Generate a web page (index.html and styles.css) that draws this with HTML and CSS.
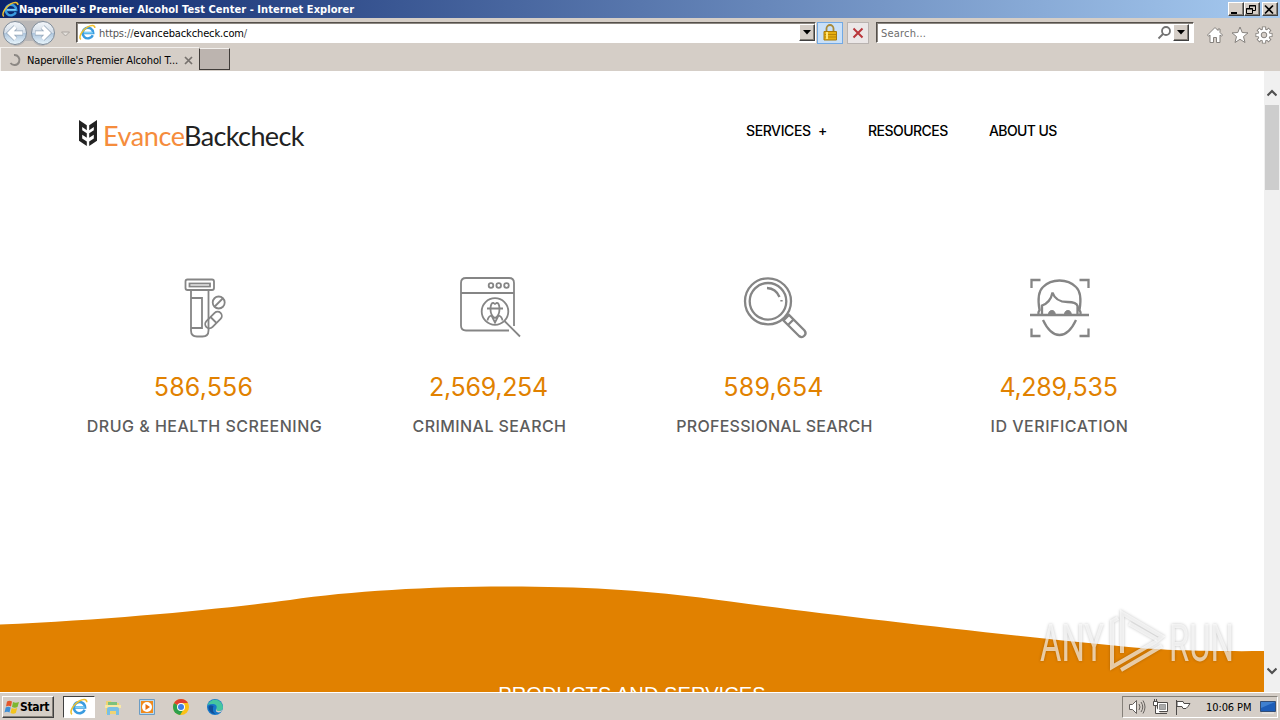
FILE: index.html
```html
<!DOCTYPE html>
<html lang="en">
<head>
  <meta charset="UTF-8" />
  <meta name="viewport" content="width=device-width, initial-scale=1.0"/>
  <title>Naperville's Premier Alcohol Test Center</title>
  <link rel="stylesheet" href="styles.css">
</head>
<body>
  <!-- shared symbols -->
  <svg width="0" height="0" class="defs">
    <symbol id="ie" viewBox="0 0 16 16">
      <path d="M13 10.500A5 5 0 1 1 13.400 8.400H4.200" fill="none" stroke="#3a9ce0" stroke-width="2.300"/>
      <path d="M4.600 8.200h8.400" stroke="#7fd0f7" stroke-width="1.400"/>
      <path d="M1.700 14.600C-.8 12.200 3 5.700 8.200 2.700 11.500.8 15 .6 14.900 3.700" fill="none" stroke="#efc02f" stroke-width="1.400"/>
    </symbol>
    <symbol id="down" viewBox="0 0 8 5"><path d="M0 0h8L4 4.500z" fill="#000"/></symbol>
  </svg>

  <div class="titlebar">
    <svg class="ie-icon" width="17" height="17"><use href="#ie"/></svg>
    <span class="title">Naperville's Premier Alcohol Test Center - Internet Explorer</span>
    <div class="win-buttons">
      <button><svg width="12" height="11"><path d="M2 8h6v2H2z"/></svg></button>
      <button><svg width="12" height="11" fill="none" stroke="#000"><path d="M4.500 4V1.500h6v5H8M4 2h7M1.500 4.500h6v5h-6zM1 5h7"/></svg></button>
      <button class="close"><svg width="12" height="11" stroke="#000" stroke-width="1.700"><path d="M2 1.500l8 8M10 1.500l-8 8"/></svg></button>
    </div>
  </div>

  <div class="navbar">
    <svg class="back-forward" width="74" height="28" viewBox="0 0 74 28">
      <defs>
        <linearGradient id="orb" x1="0" y1="0" x2="0" y2="1">
          <stop offset="0" stop-color="#f4f7fa"/><stop offset=".48" stop-color="#d3dde8"/>
          <stop offset=".52" stop-color="#afc6dd"/><stop offset="1" stop-color="#e9f6fd"/>
        </linearGradient>
      </defs>
      <path d="M15 1.500h28a13 13 0 0 1 0 25.500q-7 0-10-5h-8q-3 5-10 5a13 13 0 0 1 0-25.500z" fill="#b9b7b7"/>
      <circle cx="15" cy="14" r="11.500" fill="url(#orb)" stroke="#808c99"/>
      <circle cx="43" cy="14" r="11.500" fill="url(#orb)" stroke="#808c99"/>
      <path d="M23 14H10M15.500 8L9.500 14l6 6" fill="none" stroke="#93a5b8" stroke-width="5"/>
      <path d="M22.500 14H10M15.500 8L9.500 14l6 6" fill="none" stroke="#fff" stroke-width="3.600"/>
      <path d="M35 14h13M42.500 8l6 6-6 6" fill="none" stroke="#93a5b8" stroke-width="5"/>
      <path d="M35.500 14H48M42.500 8l6 6-6 6" fill="none" stroke="#fff" stroke-width="3.600"/>
      <path d="M61.500 13h8l-4 4z" fill="#e4e0dc" stroke="#aaa5a0"/>
    </svg>
    <div class="field address">
      <svg width="17" height="17"><use href="#ie"/></svg>
      <span class="url"><i>https://</i>evancebackcheck.com<i>/</i></span>
      <button class="drop"><svg width="8" height="5"><use href="#down"/></svg></button>
    </div>
    <div class="tool lock">
      <svg width="16" height="18" viewBox="0 0 16 18">
        <path d="M4.500 8V4.500a3.500 3.500 0 0 1 7 0V8" fill="none" stroke="#a88a3a" stroke-width="1.800"/>
        <path d="M2 7.500h12.500v8.500H2z" fill="#e5ae10" stroke="#a97a08"/>
        <path d="M2.500 10.500h11.500M2.500 13h11.500" stroke="#b98505"/>
        <path d="M5 8v7" stroke="#ffe477" stroke-width="2"/>
      </svg>
    </div>
    <div class="tool stop">
      <svg width="12" height="12" viewBox="0 0 12 12"><path d="M1.500 1.500l9 9M10.500 1.500l-9 9" stroke="#b9363b" stroke-width="2"/></svg>
    </div>
    <div class="field search">
      <span class="hint">Search...</span>
      <svg width="15" height="15" viewBox="0 0 15 15" fill="none" stroke="#737373" stroke-width="1.800"><circle cx="9" cy="6" r="4"/><path d="M6 9l-4.500 4.500"/></svg>
      <button class="drop"><svg width="8" height="5"><use href="#down"/></svg></button>
    </div>
    <div class="chrome-icons">
      <svg width="18" height="18" viewBox="0 0 18 18"><path d="M9 1.500L1.500 9l1 1.200L4 9v7.500h3.500v-5h3v5H14V9l1.500 1.200 1-1.200-2.500-2.500V3h-2v1.500z" fill="#fff" stroke="#85817d"/></svg>
      <svg width="18" height="18" viewBox="0 0 18 18"><path d="M9 1l2.200 5.500 5.800.4-4.500 3.700 1.500 5.900-5-3.200-5 3.200 1.500-5.900L1 6.900l5.800-.4z" fill="#fff" stroke="#85817d"/></svg>
      <svg width="18" height="18" viewBox="0 0 18 18">
        <g stroke="#85817d" stroke-width="4.200"><path d="M9 .5v17M.5 9h17M3 3l12 12M15 3L3 15"/></g>
        <circle cx="9" cy="9" r="6.500" fill="#85817d"/>
        <g stroke="#fff" stroke-width="2.400"><path d="M9 1.300v15.400M1.300 9h15.400M3.600 3.600l10.800 10.800M14.400 3.600L3.600 14.400"/></g>
        <circle cx="9" cy="9" r="5.600" fill="#fff"/>
        <circle cx="9" cy="9" r="2.800" fill="#d5cec7" stroke="#85817d"/>
      </svg>
    </div>
  </div>

  <div class="tabs">
    <div class="tab">
      <svg width="14" height="14" viewBox="0 0 14 14" fill="none" stroke="#8c8884" stroke-width="2"><path d="M6 2a5 5 0 1 1-3.500 8"/></svg>
      <span class="tab-title">Naperville's Premier Alcohol T...</span>
      <svg width="9" height="9" viewBox="0 0 9 9"><path d="M1 1l7 7M8 1L1 8" stroke="#76716d" stroke-width="1.700"/></svg>
    </div>
    <div class="new-tab"></div>
  </div>

  <div class="viewport">
    <div class="page">
      <header>
        <a class="logo">
          <svg width="18" height="27" viewBox="0 0 18 27" fill="#222">
            <path d="M0 0l7.800 5.200v5L3.200 7v3.200l4.600 3v4.600l-4.600-3v3.800l4.600 3V26L0 20.800z"/>
            <path d="M18 0l-7.800 5.200v5L14.800 7v3.200l-4.600 3v4.600l4.600-3v3.800l-4.600 3V26L18 20.800z"/>
          </svg>
          <span class="evance">Evance</span><span class="backcheck">Backcheck</span>
        </a>
        <nav>
          <a class="n1">SERVICES <b>+</b></a>
          <a class="n2">RESOURCES</a>
          <a class="n3">ABOUT US</a>
        </nav>
      </header>

      <section class="stats">
        <div class="stat">
          <svg width="70" height="80" viewBox="0 0 70 80">
            <rect x="15.500" y="14.500" width="28.500" height="10.500" rx="2"/>
            <rect x="19.500" y="18.500" width="20.500" height="3"/>
            <path d="M21 25v40.500q0 6 6 6h5.500q6 0 6-6V25M21 33h11v30H21"/>
            <circle cx="48.700" cy="37.500" r="6"/><path d="M44.700 41.500l8-8"/>
            <rect x="-10" y="-4.200" width="20" height="8.400" rx="4.200" transform="translate(43.500 55) rotate(-45)"/><path d="M40.500 52l6 6"/>
          </svg>
          <h3>586,556</h3>
          <p class="l1">DRUG &amp; HEALTH SCREENING</p>
        </div>
        <div class="stat">
          <svg width="80" height="80" viewBox="-1 0 80 80">
            <path d="M64 48V18q0-5-5-5H16q-5 0-5 5v42.500q0 5 5 5h43M11 28h53"/>
            <circle cx="41" cy="20.500" r="2.300"/><circle cx="48.700" cy="20.500" r="2.300"/><circle cx="56.500" cy="20.500" r="2.300"/>
            <circle cx="45" cy="46.500" r="13.300"/><path d="M54.500 56L70 71.500M64 48v13"/>
            <path d="M37 43.500h16M40.500 43q.5-5.500 3-5l1.500 1 1.500-1q2.500-.5 3 5M40.500 44q0 7 4.500 9 4.500-2 4.500-9M37.500 55.500q.5-4 4-5l3.500 7 3.500-7q3.500 1 4 5"/>
          </svg>
          <h3 class="wide">2,569,254</h3>
          <p class="l2">CRIMINAL SEARCH</p>
        </div>
        <div class="stat">
          <svg width="80" height="80" viewBox="-1 0 80 80" class="bold">
            <circle cx="33" cy="36.300" r="23"/><circle cx="33" cy="36.300" r="18.300"/>
            <path d="M32 23q9 .5 12.500 9M46.500 35v1.500M48.500 55.500l5.500-5.500 15.500 15.500q2.300 2.800-.2 5.300t-5.300.2zM53 60l5.500-5.500"/>
          </svg>
          <h3>589,654</h3>
          <p class="l3">PROFESSIONAL SEARCH</p>
        </div>
        <div class="stat">
          <svg width="80" height="80" viewBox=".5 0 80 80" class="bold">
            <path d="M12 23v-8h9M60 15h9v8M12 63.500v7.500h9M60 71h9v-7.500M10.500 50h59"/>
            <path d="M19 50q-.5-3 1-5-3-17 3.500-23Q30 15.500 40 15.500T56.500 22q6.500 6 3.500 23 1.500 2 1 5M22.500 49v-8.500q8.500-3 10.500-13 3 9.500 15 9.500 9 0 10 4v8"/>
            <path d="M23.500 55q7 15 16.500 15T56.500 55"/>
            <path d="M29 50a3.400 4.500 0 0 1 6.800 0zM45 50a3.400 4.500 0 0 1 6.800 0z" fill="#858585" stroke-width="1"/>
          </svg>
          <h3 class="wide">4,289,535</h3>
          <p class="l4">ID VERIFICATION</p>
        </div>
      </section>

      <section class="products">
        <svg class="wave" width="1264" height="70" viewBox="0 583 1264 70">
          <path d="M0 624.500C120 619 220 609 290 600 350 591 430 586.500 505 586.500 580 586.500 640 590 700 597.500 810 612.500 1010 636 1140 648 1170 650.500 1220 651.500 1264 651V653H0z" fill="#e18100"/>
        </svg>
        <h2>PRODUCTS AND SERVICES</h2>
      </section>
    </div>
    <div class="scrollbar">
      <svg width="10" height="8" viewBox="0 0 10 8"><path d="M.5 6.500L5 2l4.500 4.500" fill="none" stroke="#505050" stroke-width="2.200"/></svg>
      <div class="thumb"></div>
      <svg class="bottom" width="10" height="8" viewBox="0 0 10 8"><path d="M.5 1.500L5 6l4.500-4.500" fill="none" stroke="#505050" stroke-width="2.200"/></svg>
    </div>
    <svg class="watermark" width="214" height="74" viewBox="1034 604 214 74">
      <text x="1040" y="660" textLength="64" lengthAdjust="spacingAndGlyphs">ANY</text>
      <g fill="none" stroke="#fff" stroke-opacity=".65" stroke-width="4">
        <path d="M1118 617l-6 3.500v45.500l45-26"/>
        <path d="M1122 652v-40l40 23.500-4 3.500-29-16.500"/>
        <path d="M1121 669l41-24"/>
      </g>
      <text x="1169" y="660" textLength="65" lengthAdjust="spacingAndGlyphs">RUN</text>
    </svg>
  </div>

  <div class="taskbar">
    <button class="start">
      <svg width="16" height="16" viewBox="0 0 16 16">
        <path d="M3 2.500q2.500-1.500 5 0L7 7.500q-2.500-1.500-5 0z" fill="#e4572b"/><path d="M9 3q2.500 1.500 6 0l-1.500 5q-2.500 1.500-5.500 0z" fill="#7db72f"/>
        <path d="M1.700 8.500q2.500-1.500 5 0l-1.200 5q-2.500-1.500-5 0z" fill="#3f8fd6"/><path d="M7.700 9q2.500 1.500 5.500 0l-1.400 5q-2.500 1.500-5.300 0z" fill="#f4c41c"/>
      </svg>
      Start
    </button>
    <div class="task active"><svg width="18" height="18"><use href="#ie"/></svg></div>
    <div class="task">
      <svg width="18" height="18" viewBox="0 0 18 18"><path d="M2 3h5l1 2h7v11H2z" fill="#efd373"/><path d="M4 4h9v3H4z" fill="#7cc17c"/><path d="M1 7h16v3H1z" fill="#f7e8a6"/><path d="M3 17v-6q0-2 2-2h8q2 0 2 2v6h-3v-4H6v4z" fill="#79bfe5"/></svg>
    </div>
    <div class="task">
      <svg width="18" height="18" viewBox="0 0 18 18"><path d="M1.500 1.500h15v15h-15z" fill="#b9d9ef" stroke="#6b9cc4"/><path d="M3 3h12v12H3z" fill="#f08a1d"/><circle cx="9" cy="9" r="5" fill="#fff"/><path d="M7.500 6l4.500 3-4.500 3z" fill="#e86f10"/></svg>
    </div>
    <div class="task">
      <svg width="18" height="18" viewBox="0 0 18 18"><circle cx="9" cy="9" r="8" fill="#fbc116"/><path d="M9 9L2.100 5a8 8 0 0 0 6 12l3-5z" fill="#2da04c"/><path d="M2.100 5a8 8 0 0 1 13.800 0H9v4z" fill="#df3f31"/><circle cx="9" cy="9" r="4" fill="#fff"/><circle cx="9" cy="9" r="3" fill="#3f7fe6"/></svg>
    </div>
    <div class="task">
      <svg width="18" height="18" viewBox="0 0 18 18"><circle cx="9" cy="9" r="8" fill="#1677c9"/><path d="M1.500 7a8 8 0 0 1 15.500 2q0 4-4.500 4-3 0-2-2.500 1-4-3-4.500-3-.2-6 1z" fill="#45c6a0"/><path d="M7.500 8q-2 5 2 8-6-.5-7-6 0-4 5-2z" fill="#104f99"/><path d="M10.500 10q-1 3 2 3 3 0 4-1.500-1 3-4 3-4-.5-2-4.500z" fill="#d5cec7"/></svg>
    </div>
    <div class="tray">
      <svg width="18" height="16" viewBox="0 0 18 16" fill="#fff" stroke="#65615e"><path d="M1.500 5.500h3l4-4v13l-4-4h-3z"/><path d="M11 5q2 3 0 6M13 3q3.500 5 0 10M15 1.500q4 6.500 0 13" fill="none"/></svg>
      <svg width="17" height="16" viewBox="0 0 17 16" fill="#fff" stroke="#4e4b49"><path d="M5.500 3.500h10v9h-10z"/><path d="M7.500 5.500h6v5h-6z" fill="#aaa" stroke="#999"/><path d="M8 14.500h7M1.500 2.500h4v4h-4zM2.500 0v2M4.500 0v2M3.500 7v7.500h5"/></svg>
      <svg width="16" height="16" viewBox="0 0 16 16" fill="#fff" stroke="#4e4b49"><path d="M1.500 1v15M2 2.500h6l1 2h6l-2 3-2 2H8l-1-2H2z"/></svg>
      <span class="clock">10:06 PM</span>
      <svg width="16" height="13" viewBox="0 0 16 13"><path d="M.5.500h15v10H.5z" fill="#1d5db8" stroke="#344e75"/><path d="M1 1h14L1 7z" fill="#3f80d0"/><path d="M2 12h12" stroke="#eee"/></svg>
    </div>
  </div>
</body>
</html>
```

FILE: styles.css
```css
* {
  box-sizing: border-box;
}
body {
  margin: 0;
  width: 1280px;
  height: 720px;
  overflow: hidden;
  display: flex;
  flex-direction: column;
  background: #d5cec7;
  font-family: "DejaVu Sans Condensed", "DejaVu Sans", sans-serif;
  font-size: 11px;
  color: #000;
}
svg {
  display: block;
  flex: none;
}
button {
  padding: 0;
  font: inherit;
  background: #d5cec7;
  border: 1px solid;
  border-color: #fff #404040 #404040 #fff;
  box-shadow: inset -1px -1px #858079;
}
span, a, h2, h3, p {
  white-space: nowrap;
}
.defs {
  position: absolute;
}

/* window title */
.titlebar {
  height: 18px;
  display: flex;
  align-items: center;
  padding: 0 2px;
  background: linear-gradient(to right, #0a246a, #a6caf0);
}
.title {
  color: #fff;
  font-weight: bold;
  letter-spacing: 0.06px;
}
.win-buttons {
  display: flex;
  margin-left: auto;
}
.win-buttons button {
  width: 16px;
  height: 14px;
}
.win-buttons .close {
  margin-left: 2px;
}

/* address row */
.navbar {
  height: 29px;
  display: flex;
  align-items: center;
}
.back-forward {
  margin-right: 2px;
}
.field {
  height: 21px;
  display: flex;
  align-items: center;
  background: #fff;
  border: 1px solid;
  border-color: #55504b #fff #fff #55504b;
  box-shadow: inset 1px 1px #8c8781;
}
.address {
  width: 740px;
  padding: 0 0 0 2px;
}
.url {
  margin-left: 3px;
  padding-top: 2px;
  letter-spacing: -0.12px;
}
.url i {
  font-style: normal;
  color: #555;
}
.drop {
  width: 16px;
  height: 17px;
  display: flex;
  align-items: center;
  justify-content: center;
}
.address .drop {
  margin-left: auto;
}
.tool {
  height: 22px;
  display: flex;
  align-items: center;
  justify-content: center;
}
.lock {
  width: 26px;
  margin-left: 1px;
  background: #c9e0f8;
  border: 1px solid #72a9e4;
}
.stop {
  width: 22px;
  margin: 0 7px 0 4px;
  background: #ebe7e7;
  border: 1px solid #b9b3b0;
}
.search {
  width: 318px;
  padding: 0 4px 0 4px;
}
.hint {
  color: #6d6d6d;
  margin-right: auto;
  padding-top: 2px;
  letter-spacing: 0.2px;
}
.search .drop {
  margin-left: 1px;
}
.chrome-icons {
  display: flex;
  gap: 6.5px;
  margin: 4px 0 0 12px;
}

/* tabs */
.tabs {
  height: 24px;
  display: flex;
}
.tab {
  width: 199px;
  height: 24px;
  padding: 1px 6px 0 7px;
  display: flex;
  align-items: center;
  border: solid #f3f0ed;
  border-width: 1px 0 0 1px;
}
.tab-title {
  margin-left: 5px;
  margin-right: auto;
  letter-spacing: -0.15px;
}
.new-tab {
  width: 31px;
  height: 22px;
  margin-top: 1px;
  background: #bcb4af;
  border: 1px solid #403c39;
  border-top-color: #f3f0ed;
}

/* page */
.viewport {
  position: relative;
  height: 621px;
  display: flex;
}
.page {
  width: 1264px;
  height: 621px;
  overflow: hidden;
  background: #fff;
  font-family: Inter, sans-serif;
}
header {
  height: 124px;
  display: flex;
  padding: 49px 0 0 79px;
}
.logo {
  display: flex;
  width: 667px;
  font-family: Lato, sans-serif;
  font-size: 27px;
  line-height: 32px;
}
.evance {
  margin-left: 6px;
  width: 81px;
  color: #f58c3c;
  letter-spacing: -0.4px;
}
.backcheck {
  color: #222;
  letter-spacing: -0.6px;
}
nav {
  display: flex;
  font-size: 14px;
  line-height: 22px;
  font-weight: 500;
}
nav b {
  font-weight: 500;
  margin-left: 4px;
}
.n1 {
  width: 122px;
  letter-spacing: -0.4px;
}
.n2 {
  width: 121px;
  letter-spacing: -0.52px;
}
.n3 {
  letter-spacing: -0.6px;
}
.stats {
  width: 1140px;
  height: 388px;
  margin: 0 auto;
  padding-top: 70px;
  display: grid;
  grid-template-columns: repeat(4, 285px);
  justify-items: center;
  text-align: center;
}
.stat {
  display: flex;
  flex-direction: column;
  align-items: center;
}
.stat svg {
  fill: none;
  stroke: #858585;
  stroke-width: 1.8;
}
.stat svg.bold {
  stroke-width: 2.3;
}
.stat h3 {
  margin: 24px 2px 0 0;
  font-size: 25px;
  line-height: 36px;
  font-weight: 400;
  color: #e18100;
  letter-spacing: 0.2px;
}
.stat h3.wide {
  letter-spacing: -0.3px;
}
.stat p {
  margin: 9px 0 0;
  font-size: 16px;
  line-height: 24px;
  font-weight: 500;
  color: #5c5c5c;
}
.stat .l1 {
  letter-spacing: 0.5px;
}
.stat .l2 {
  letter-spacing: 0.42px;
}
.stat .l3 {
  letter-spacing: 0.26px;
}
.stat .l4 {
  letter-spacing: 0.52px;
}
.products {
  background: #e18100;
}
.wave {
  background: #fff;
}
.products h2 {
  margin: 0;
  padding-top: 28px;
  height: 60px;
  color: #fff;
  text-align: center;
  font-family: "Liberation Sans", sans-serif;
  font-size: 20px;
  line-height: 26px;
  font-weight: 400;
  letter-spacing: 0.1px;
}
.scrollbar {
  width: 16px;
  background: #f0f0f0;
  display: flex;
  flex-direction: column;
  align-items: center;
  padding: 18px 0 17px;
}
.thumb {
  width: 14px;
  height: 85px;
  margin-top: 8px;
  background: #cdcdcd;
}
.scrollbar .bottom {
  margin-top: auto;
}
.watermark {
  position: absolute;
  left: 1034px;
  top: 534px;
  filter: drop-shadow(0 0 1.5px rgba(0, 0, 0, 0.35));
}
.watermark text {
  font-family: Roboto, sans-serif;
  font-size: 51px;
  font-weight: 400;
  fill: #fff;
  fill-opacity: 0.65;
}

/* taskbar */
.taskbar {
  height: 28px;
  padding: 2px 2px 1px;
  display: flex;
  align-items: center;
  border-top: 1px solid #fff;
}
.start {
  width: 52px;
  height: 22px;
  display: flex;
  align-items: center;
  padding-left: 1px;
  font-weight: bold;
  font-size: 12px;
  letter-spacing: -0.3px;
  margin-right: 9px;
}
.task {
  width: 34px;
  height: 22px;
  display: flex;
  align-items: center;
  justify-content: center;
}
.task.active {
  width: 32px;
  margin-right: 1px;
  background: #fff;
  border: 1px solid;
  border-color: #404040 #fff #fff #404040;
}
.tray {
  margin-left: auto;
  width: 156px;
  height: 22px;
  padding: 0 1px 0 5px;
  display: flex;
  align-items: center;
  border: 1px solid;
  border-color: #858079 #fff #fff #858079;
}
.tray svg {
  margin-right: 6px;
}
.tray svg:last-child {
  margin: 0 0 0 auto;
}
.clock {
  margin-left: 9px;
  letter-spacing: -0.1px;
}
```
